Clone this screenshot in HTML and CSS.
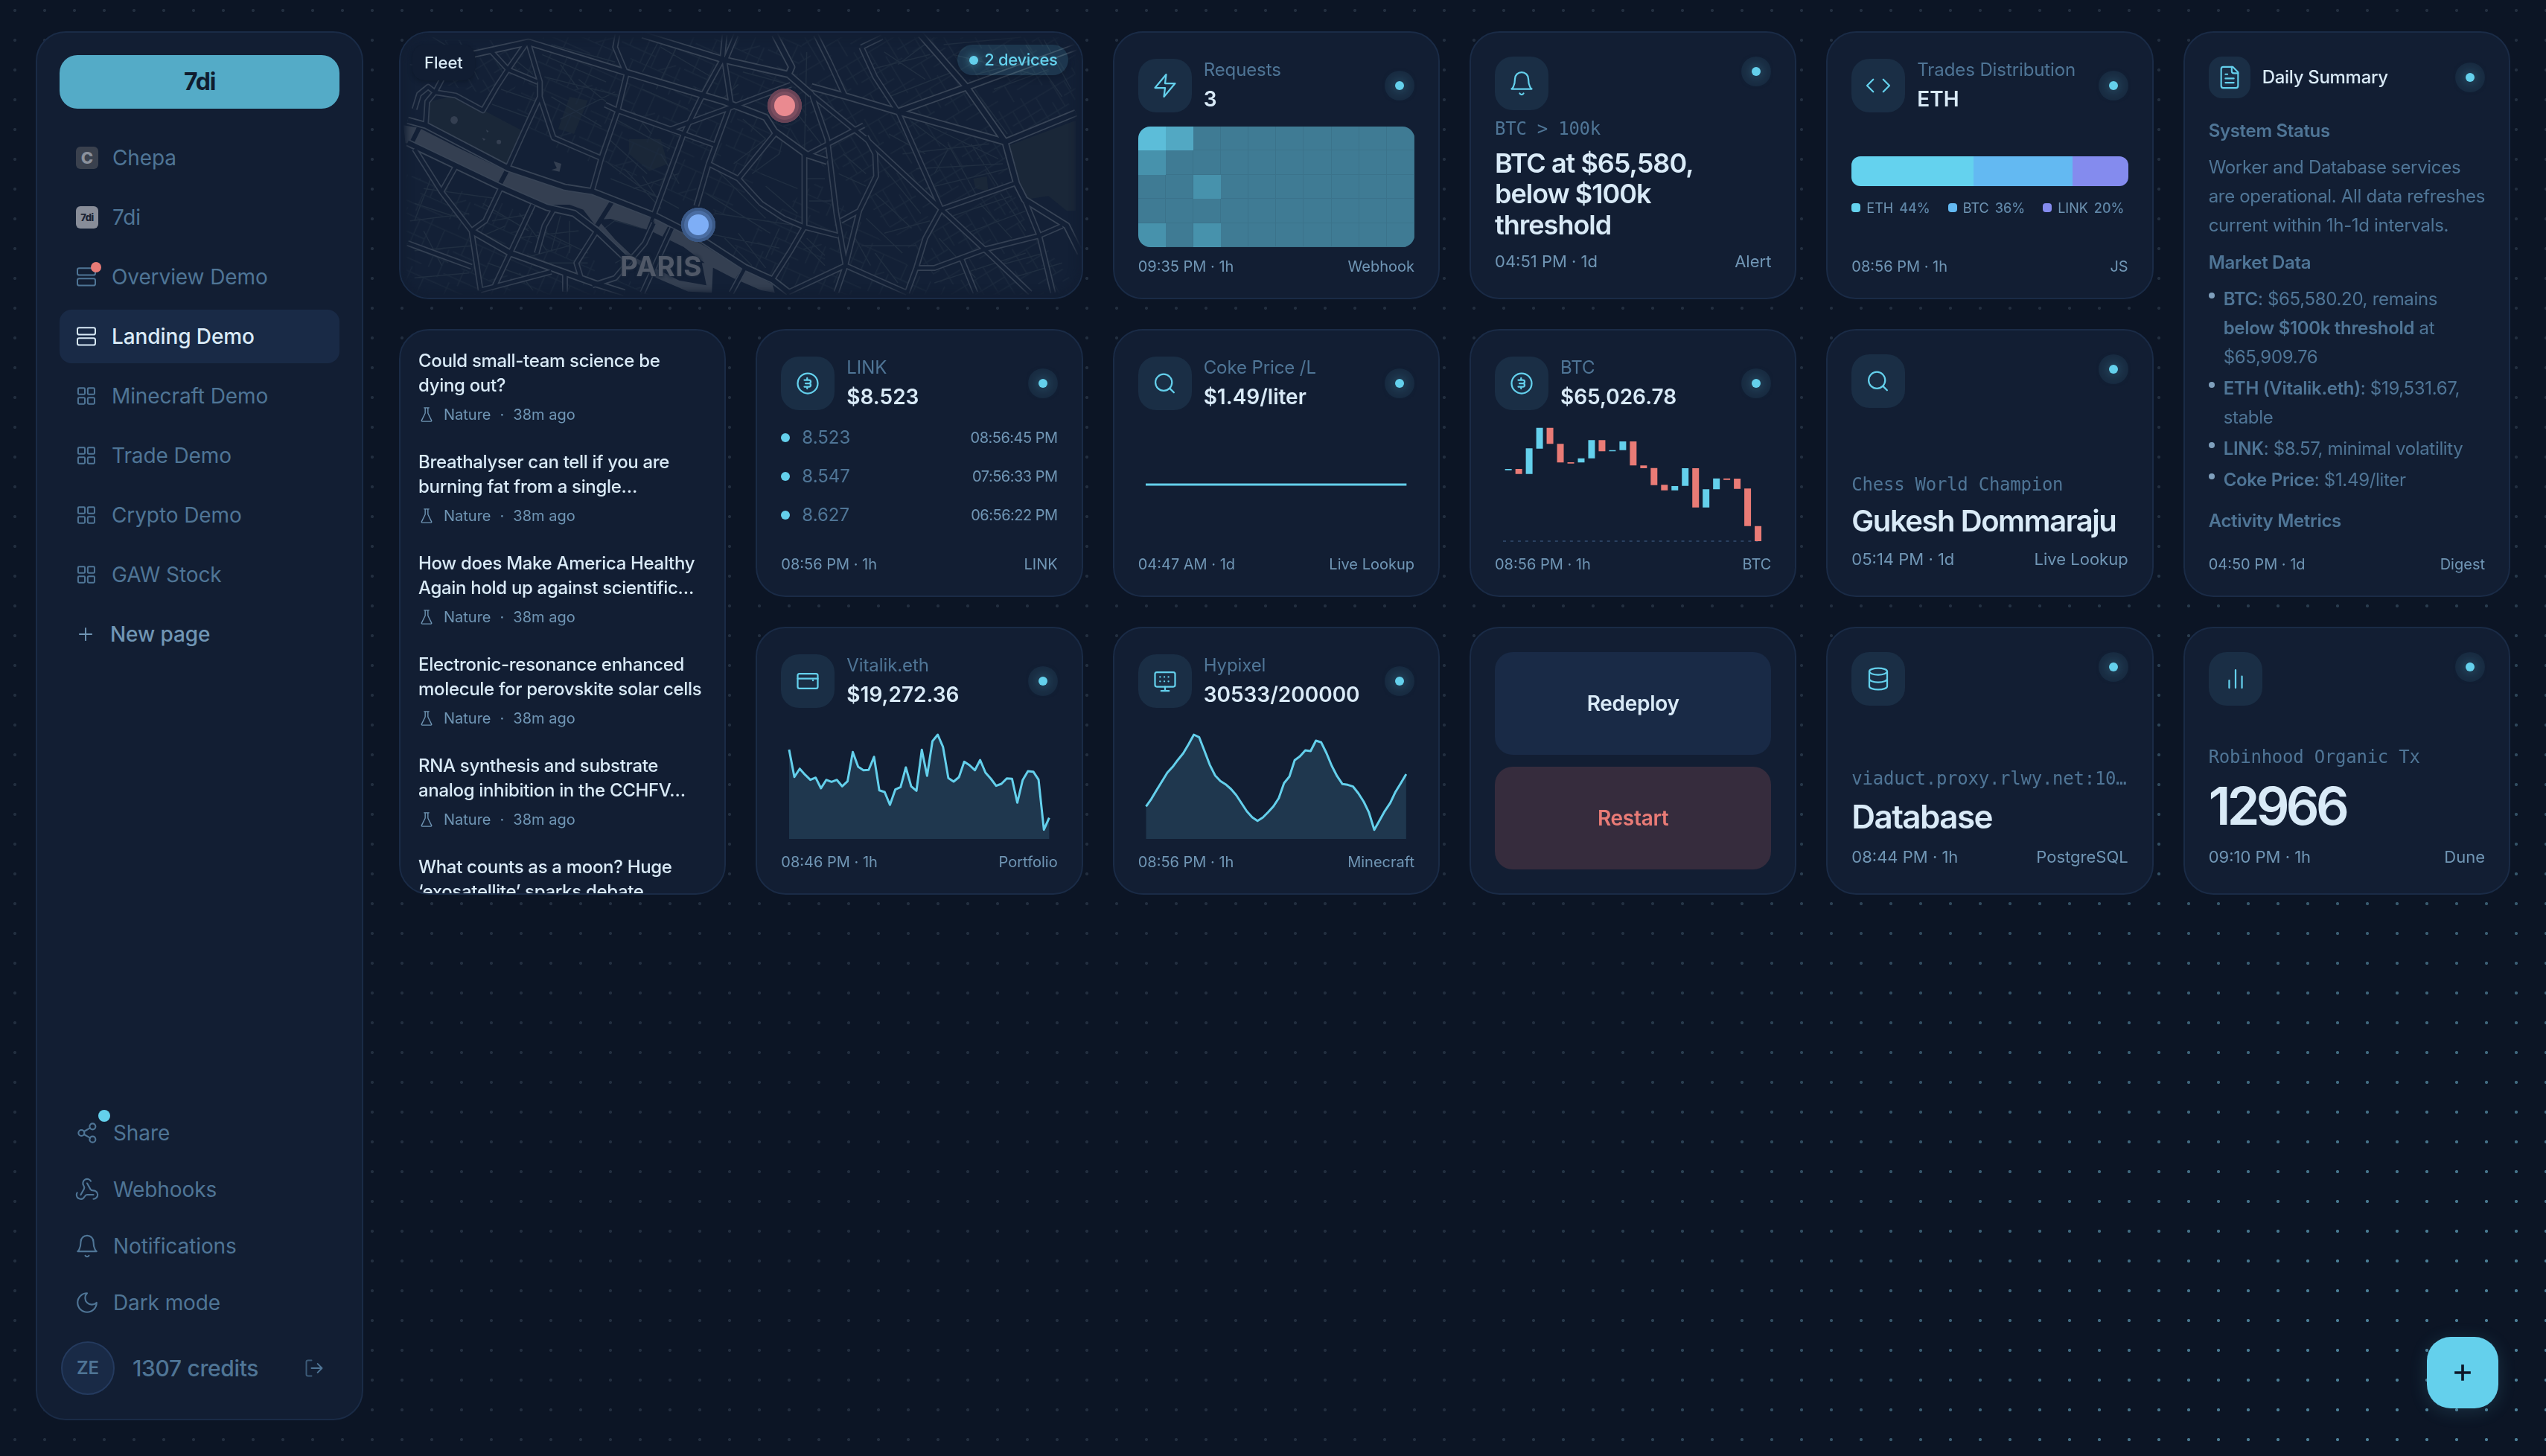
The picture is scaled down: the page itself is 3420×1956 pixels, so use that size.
FILE: index.html
```html
<!DOCTYPE html>
<html lang="en">
  <head>
    <meta charset="UTF-8">
    <meta name="viewport" content="width=device-width, initial-scale=1.0">
    <title>7di - Landing Demo</title>
    <link rel="stylesheet" href="styles.css">
  </head>
  <body>
    <svg class="sprite" xmlns="http://www.w3.org/2000/svg">
      <symbol id="i-rows" viewBox="0 0 24 24"><rect x="3" y="3.2" width="18" height="7" rx="1.8"/><rect x="3" y="13.7" width="18" height="7" rx="1.8"/></symbol>
      <symbol id="i-grid" viewBox="0 0 24 24"><rect x="3.7" y="4" width="6.8" height="6.4" rx="1"/><rect x="13.4" y="4" width="6.8" height="6.4" rx="1"/><rect x="3.7" y="13.6" width="6.8" height="6.4" rx="1"/><rect x="13.4" y="13.6" width="6.8" height="6.4" rx="1"/></symbol>
      <symbol id="i-plus" viewBox="0 0 24 24"><path d="M5.5 12h13M12 5.5v13"/></symbol>
      <symbol id="i-share" viewBox="0 0 24 24"><circle cx="17.2" cy="5.9" r="2.8"/><circle cx="6.6" cy="12" r="2.8"/><circle cx="17.2" cy="18.1" r="2.8"/><path d="M9.1 13.4l5.7 3.3M14.8 7.3L9.1 10.6"/></symbol>
      <symbol id="i-webhook" viewBox="0 0 24 24"><path d="M18 16.98h-5.99c-1.1 0-1.95.94-2.48 1.9A4 4 0 0 1 2 17c.01-.7.2-1.4.57-2"/><path d="m6 17 3.13-5.78c.53-.97.1-2.18-.5-3.1a4 4 0 1 1 6.89-4.06"/><path d="m12 6 3.13 5.73C15.66 12.7 16.9 13 18 13a4 4 0 0 1 0 8"/></symbol>
      <symbol id="i-bell" viewBox="0 0 24 24"><path d="M6 8a6 6 0 0 1 12 0c0 7 3 9 3 9H3s3-2 3-9"/><path d="M10.3 21a1.94 1.94 0 0 0 3.4 0"/></symbol>
      <symbol id="i-moon" viewBox="0 0 24 24"><path d="M12 3a6 6 0 0 0 9 9 9 9 0 1 1-9-9Z"/></symbol>
      <symbol id="i-logout" viewBox="0 0 24 24"><path opacity=".7" d="M9 21H5a2 2 0 0 1-2-2V5a2 2 0 0 1 2-2h4"/><path d="m16 17 5-5-5-5M21 12H9"/></symbol>
      <symbol id="i-zap" viewBox="0 0 24 24"><path d="M13 2 3 14h9l-1 8 10-12h-9l1-8z"/></symbol>
      <symbol id="i-code" viewBox="0 0 24 24"><path d="m16.5 17.5 5.5-5.5-5.5-5.5M7.5 6.5 2 12l5.5 5.5"/></symbol>
      <symbol id="i-file" viewBox="0 0 24 24"><path d="M15 2H6a2 2 0 0 0-2 2v16a2 2 0 0 0 2 2h12a2 2 0 0 0 2-2V7Z"/><path d="M14 2v4a2 2 0 0 0 2 2h4M10 9H8M16 13H8M16 17H8"/></symbol>
      <symbol id="i-coin" viewBox="0 0 24 24"><circle cx="12" cy="12" r="9"/><path d="M9 9h4.2a1.5 1.5 0 0 1 0 3H10M13.2 12a1.5 1.5 0 0 1 0 3H9M11.5 9V7.3M11.5 15v1.7"/></symbol>
      <symbol id="i-search" viewBox="0 0 24 24"><circle cx="10.8" cy="11.2" r="7.4"/><path d="m16.3 16.6 3.6 3.6"/></symbol>
      <symbol id="i-card" viewBox="0 0 24 24"><rect x="3" y="5.4" width="18" height="13.2" rx="1.6"/><path d="M3 9.8h18M16.6 11.4h.2"/></symbol>
      <symbol id="i-monitor" viewBox="0 0 24 24"><rect x="3" y="4" width="18" height="13" rx="1.6"/><path d="M12 17v3.8M8.5 20.8h7M7.5 8.3h.1M11.3 8.3h.1M15 8.3h.1M7.5 12.2h.1M11.3 12.2h.1M15 12.2h.1"/></symbol>
      <symbol id="i-db" viewBox="0 0 24 24"><ellipse cx="12" cy="5.4" rx="8" ry="3"/><path d="M4 5.4v13.2c0 1.7 3.6 3 8 3s8-1.3 8-3V5.4M4 12c0 1.7 3.6 3 8 3s8-1.3 8-3"/></symbol>
      <symbol id="i-bars" viewBox="0 0 24 24"><path d="M17.7 20V9.8M12 20V4M6.3 20v-6.6"/></symbol>
      <symbol id="i-flask" viewBox="0 0 24 24"><path d="M10 2v7.527a2 2 0 0 1-.211.896L4.72 20.55a1 1 0 0 0 .9 1.45h12.76a1 1 0 0 0 .9-1.45l-5.069-10.127A2 2 0 0 1 14 9.527V2M8.5 2h7"/></symbol>
    </svg>

    <div class="dots"></div>
    <div class="dots dots-glow"></div>

    <aside class="sidebar">
      <div class="brand">7di</div>
      <nav class="pages">
        <a class="nav-item"><span class="favicon favicon-c">C</span>Chepa</a>
        <a class="nav-item"><span class="favicon favicon-7">7di</span>7di</a>
        <a class="nav-item"><svg class="icon"><use href="#i-rows"/></svg>Overview Demo<span class="dot-red"></span></a>
        <a class="nav-item active"><svg class="icon"><use href="#i-rows"/></svg>Landing Demo</a>
        <a class="nav-item"><svg class="icon"><use href="#i-grid"/></svg>Minecraft Demo</a>
        <a class="nav-item"><svg class="icon"><use href="#i-grid"/></svg>Trade Demo</a>
        <a class="nav-item"><svg class="icon"><use href="#i-grid"/></svg>Crypto Demo</a>
        <a class="nav-item"><svg class="icon"><use href="#i-grid"/></svg>GAW Stock</a>
        <a class="nav-item new"><svg class="icon"><use href="#i-plus"/></svg>New page</a>
      </nav>
      <nav class="tools">
        <a class="tool-item"><svg class="icon"><use href="#i-share"/></svg>Share<span class="dot-cyan"></span></a>
        <a class="tool-item"><svg class="icon"><use href="#i-webhook"/></svg>Webhooks</a>
        <a class="tool-item"><svg class="icon"><use href="#i-bell"/></svg>Notifications</a>
        <a class="tool-item"><svg class="icon"><use href="#i-moon"/></svg>Dark mode</a>
      </nav>
      <div class="account">
        <span class="avatar">ZE</span>
        <span class="credits">1307 credits</span>
        <svg class="icon"><use href="#i-logout"/></svg>
      </div>
    </aside>

    <main class="board">
      <section class="card map-card">
        <svg class="map" viewBox="0 0 914 356" preserveAspectRatio="none">
          <defs>
            <pattern id="streets-a" width="92" height="70" patternUnits="userSpaceOnUse" patternTransform="rotate(24)">
              <path d="M0 8h92M0 30h50M20 46h72M0 62h60M12 0v30M34 8v38M50 0v46M70 8v54M86 30v40M24 46v24M60 46l20-16"/>
            </pattern>
            <pattern id="streets-b" width="80" height="84" patternUnits="userSpaceOnUse" patternTransform="rotate(-31)">
              <path d="M0 10h80M0 27h46M16 40h64M0 58h56M30 72h50M10 10v30M28 0v58M46 10v48M62 27v57M74 0v40M18 58v26"/>
            </pattern>
            <g id="major">
              <path d="M185 160 310 110 530 235 740 350 830 413 850 470 920 563 965 590"/>
              <path d="M560 80 740 182 880 240 M850 80 887 210 880 240 930 320"/>
              <path d="M930 290 1010 330 1120 390 1355 512 1510 395"/>
              <path d="M1170 80 1270 290 1355 512 1380 680 1398 745 1490 850 1520 960"/>
              <path d="M1120 390 1280 285 1510 130"/>
              <path d="M45 425 85 445 265 618 390 695 450 712 590 812 690 905 785 1018 845 1068 880 1118"/>
              <path d="M45 515 250 695 350 775 410 800 460 870 520 975"/>
              <path d="M185 870 270 960 460 1085 520 1120"/>
            </g>
            <g id="roads">
              <path d="M940 80 970 190 1005 330 M1040 130 1070 250 1120 390 1215 783 M1085 90 1040 130"/>
              <path d="M740 80 735 180 690 330 650 480 580 830 M765 80 740 190 755 370"/>
              <path d="M885 282 750 375 620 462 M750 375 720 525 705 600 678 770"/>
              <path d="M505 80 500 130 525 240 505 390 470 575 450 705 M478 362 505 385 720 525"/>
              <path d="M310 115 335 270 335 330 300 470 265 612 M335 330 365 495 470 578"/>
              <path d="M225 140 265 220 330 270 M305 115 265 220 240 290 210 385 150 325 105 312 M85 440 88 350 105 312 90 290 70 320 60 380 M105 312 120 260"/>
              <path d="M705 600 770 660 850 480 M770 660 820 760 870 820 915 855 990 890"/>
              <path d="M915 560 915 855 885 950 845 1065"/>
              <path d="M930 315 965 500 985 800 1005 1010 M930 320 1050 500 1215 783 M1045 445 920 565"/>
              <path d="M1050 490 1070 560 1072 650 1035 790 995 830 M1035 790 1005 1010"/>
              <path d="M1215 783 1375 680 M1215 783 1180 900 1160 1020 1140 1120 M1215 783 1310 945 1410 1120"/>
              <path d="M1160 1020 1200 1020 1310 945 1430 890 1480 850 M1005 1010 1140 1120 M1005 1010 880 1118 M1005 1010 985 1118"/>
              <path d="M1430 890 1460 1120 M1260 985 1290 1120 M1398 745 1430 890"/>
              <path d="M60 540 120 715 185 870 205 1110 M150 612 120 710 M250 695 215 830 185 870 M45 920 185 1015"/>
              <path d="M320 765 270 960 235 1095 M365 785 345 850 328 960 M460 870 415 1000 425 1060 M205 1110 360 1035 M390 1040 390 1115"/>
              <path d="M585 840 565 920 500 1060 450 1090 M625 860 590 1000 560 1120 M785 1018 755 1120"/>
            </g>
            <path id="lanes" d="M340 160 480 270 M360 120 500 190 M345 250 520 330 M600 90 560 230 M640 110 590 300 M560 300 660 380 M600 130 720 260 M780 230 880 280 M770 280 740 330 M780 420 830 500 760 600 M870 480 860 560 800 640 M900 400 960 540 M920 150 915 560 M820 640 900 700 M830 690 900 800 M920 660 960 660 M925 750 975 750 M1000 560 1050 640 M990 640 1050 690 M1090 150 1180 260 M1060 220 1190 160 M1100 330 1240 230 M1200 90 1120 200 M1220 120 1390 90 M1240 160 1420 240 M1290 240 1460 160 M1330 300 1450 220 M1400 120 1480 330 M1440 100 1500 300 M1300 330 1360 480 M1150 430 1230 540 1200 640 M1180 440 1340 580 M1100 480 1180 560 M1130 560 1320 520 M1160 620 1350 600 M1180 700 1360 620 M1230 520 1290 720 M1280 520 1340 690 M1240 810 1370 730 M1270 880 1400 790 M1300 760 1370 900 M1345 720 1400 870 M1090 620 1170 800 M1070 720 1150 860 M1050 820 1130 960 M1090 880 1190 830 M1040 930 1160 930 M1020 880 1060 1010 M1070 960 1120 1080 M1210 900 1290 1060 M1200 1080 1400 960 M1340 1010 1440 960 M1370 1060 1480 1000 M720 620 830 820 M700 720 840 880 M720 800 900 850 M700 880 860 940 M740 900 800 1010 M770 880 830 1020 M860 860 830 980 M900 900 960 1010 M920 900 960 970 M480 590 560 700 640 780 M520 620 600 780 M490 660 600 740 M540 700 640 640 M560 650 600 760 M600 560 640 680 M480 490 570 640 M420 260 480 350 M380 200 420 300 M360 330 470 450 M380 420 500 310 M500 420 620 540 M540 390 580 480 M60 150 120 130 M50 200 160 230 M100 90 180 180 M160 110 200 260 M280 180 320 240 M250 300 330 350 M230 360 320 420 M80 700 240 740 M60 760 160 820 M50 830 180 800 M100 640 60 830 M60 950 190 930 M80 870 120 1010 M60 1060 180 1040 M210 760 310 870 M230 830 320 800 M210 890 260 850 M290 800 350 950 M280 900 420 870 M340 870 440 960 M380 810 360 950 M400 830 400 960 M300 980 400 930 M340 1000 440 1000 M290 1040 320 1110 M220 1000 310 1060 M520 800 470 870 M500 830 560 860 M560 940 500 1000"/>
          </defs>
          <g class="map-space" transform="translate(-18 -24) scale(.61224 .33333)">
            <path class="park" d="M85 440 90 350 150 325 300 470 265 610Z M1365 525 1510 425 1510 790 1490 790 1450 730 1398 745Z M530 500 600 500 615 600 575 630 530 560Z M400 330 440 345 410 480 375 460Z M1285 660 1315 650 1318 710 1290 700Z"/>
          </g>
          <path fill="url(#streets-a)" d="M180 6 540 6 520 150 430 250 390 230 150 130Z M8 190 140 230 250 300 340 352 8 352Z M560 200 700 330 760 352 540 352 430 300Z"/>
          <path fill="url(#streets-b)" d="M540 6 906 6 906 100 810 150 830 240 906 340 906 352 740 352 600 200 520 150Z M60 10 170 10 150 90 60 70Z"/>
          <g class="map-space" transform="translate(-18 -24) scale(.61224 .33333)">
            <use class="lane" href="#lanes"/>
            <path class="water" d="M36 445 70 455 150 530 265 632 340 668 400 705 450 718 495 752 590 822 640 872 700 935 780 1025 845 1085 850 1120 820 1110 760 1062 700 1005 650 935 580 872 540 848 490 822 462 825 500 905 540 975 640 1070 700 1090 690 1000 715 1000 712 1120 660 1115 590 1060 525 970 470 880 430 785 400 765 345 765 250 690 190 640 120 575 40 515Z"/>
            <ellipse class="water" cx="147" cy="424" rx="8" ry="16"/><ellipse class="water" cx="245" cy="512" rx="5" ry="9"/>
            <path class="water" d="M365 590 382 600 378 632 360 625 372 618Z M208 495l8 6-4 6z M217 463l6 6-4 5z"/>
            <path class="bridge" d="M72 448 50 530 M265 620 245 690 M495 748 460 850 M585 815 572 875 M622 850 600 925 M785 1018 762 1085"/>
            <use class="casing-major" href="#major"/>
            <use class="casing" href="#roads"/>
            <use class="fill-major" href="#major"/>
            <use class="fill" href="#roads"/>
          </g>
        </svg>
        <div class="map-fade"></div>
        <span class="map-city">PARIS</span>
        <span class="pin pin-red"></span>
        <span class="pin pin-blue"></span>
        <div class="map-bar">
          <span class="map-title">Fleet</span>
          <span class="map-count"><i></i>2 devices</span>
        </div>
      </section>

      <section class="card compact">
        <header class="head">
          <span class="tile"><svg class="icon"><use href="#i-zap"/></svg></span>
          <div class="head-text"><span>Requests</span><b>3</b></div>
          <span class="status"></span>
        </header>
        <div class="heatmap">
          <i class="l4"></i><i class="l3"></i><i></i><i></i><i></i><i></i><i></i><i></i><i></i><i></i>
          <i class="l2"></i><i></i><i></i><i></i><i></i><i></i><i></i><i></i><i></i><i></i>
          <i></i><i></i><i class="l2"></i><i></i><i></i><i></i><i></i><i></i><i></i><i></i>
          <i></i><i></i><i></i><i></i><i></i><i></i><i></i><i></i><i></i><i></i>
          <i class="l2"></i><i></i><i class="l2"></i><i></i><i></i><i></i><i></i><i></i><i></i><i></i>
        </div>
        <footer class="foot"><span>09:35 PM · 1h</span><span>Webhook</span></footer>
      </section>

      <section class="card stat">
        <header class="head-top">
          <span class="tile"><svg class="icon"><use href="#i-bell"/></svg></span>
          <span class="status"></span>
        </header>
        <div class="label">BTC &gt; 100k</div>
        <div class="value v36">BTC at $65,580,<br>below $100k<br>threshold</div>
        <footer class="foot"><span>04:51 PM · 1d</span><span>Alert</span></footer>
      </section>

      <section class="card compact">
        <header class="head">
          <span class="tile"><svg class="icon"><use href="#i-code"/></svg></span>
          <div class="head-text"><span>Trades Distribution</span><b>ETH</b></div>
          <span class="status"></span>
        </header>
        <div class="share">
          <div class="share-bar">
            <i class="c1" style="width:44%"></i><i class="c2" style="width:36%"></i><i class="c3" style="width:20%"></i>
          </div>
          <ul class="legend">
            <li><i class="c1"></i>ETH <b>44%</b></li>
            <li><i class="c2"></i>BTC <b>36%</b></li>
            <li><i class="c3"></i>LINK <b>20%</b></li>
          </ul>
        </div>
        <footer class="foot"><span>08:56 PM · 1h</span><span>JS</span></footer>
      </section>

      <section class="card compact digest">
        <header class="digest-head">
          <span class="tile tile-sm"><svg class="icon"><use href="#i-file"/></svg></span>
          <b>Daily Summary</b>
          <span class="status"></span>
        </header>
        <div class="digest-body">
          <h4>System Status</h4>
          <p>Worker and Database services<br>are operational. All data refreshes<br>current within 1h-1d intervals.</p>
          <h4>Market Data</h4>
          <ul>
            <li><b>BTC</b>: $65,580.20, remains<br><b>below $100k threshold</b> at<br>$65,909.76</li>
            <li><b>ETH (Vitalik.eth)</b>: $19,531.67,<br>stable</li>
            <li><b>LINK</b>: $8.57, minimal volatility</li>
            <li><b>Coke Price</b>: $1.49/liter</li>
          </ul>
          <h4>Activity Metrics</h4>
        </div>
        <footer class="foot"><span>04:50 PM · 1d</span><span>Digest</span></footer>
      </section>

      <section class="card news">
        <article><h3>Could small-team science be<br>dying out?</h3><p><svg class="icon"><use href="#i-flask"/></svg><span>Nature</span><span>·</span><span>38m ago</span></p></article>
        <article><h3>Breathalyser can tell if you are<br>burning fat from a single…</h3><p><svg class="icon"><use href="#i-flask"/></svg><span>Nature</span><span>·</span><span>38m ago</span></p></article>
        <article><h3>How does Make America Healthy<br>Again hold up against scientific…</h3><p><svg class="icon"><use href="#i-flask"/></svg><span>Nature</span><span>·</span><span>38m ago</span></p></article>
        <article><h3>Electronic-resonance enhanced<br>molecule for perovskite solar cells</h3><p><svg class="icon"><use href="#i-flask"/></svg><span>Nature</span><span>·</span><span>38m ago</span></p></article>
        <article><h3>RNA synthesis and substrate<br>analog inhibition in the CCHFV…</h3><p><svg class="icon"><use href="#i-flask"/></svg><span>Nature</span><span>·</span><span>38m ago</span></p></article>
        <article><h3>What counts as a moon? Huge<br>‘exosatellite’ sparks debate</h3></article>
      </section>

      <section class="card compact">
        <header class="head">
          <span class="tile"><svg class="icon"><use href="#i-coin"/></svg></span>
          <div class="head-text"><span>LINK</span><b>$8.523</b></div>
          <span class="status"></span>
        </header>
        <ul class="log">
          <li><i></i><span>8.523</span><time>08:56:45 PM</time></li>
          <li><i></i><span>8.547</span><time>07:56:33 PM</time></li>
          <li><i></i><span>8.627</span><time>06:56:22 PM</time></li>
        </ul>
        <footer class="foot"><span>08:56 PM · 1h</span><span>LINK</span></footer>
      </section>

      <section class="card compact">
        <header class="head">
          <span class="tile"><svg class="icon"><use href="#i-search"/></svg></span>
          <div class="head-text"><span>Coke Price /L</span><b>$1.49/liter</b></div>
          <span class="status"></span>
        </header>
        <svg class="chart" viewBox="0 0 372 162" preserveAspectRatio="none"><path class="line flat" d="M10 81H361"/></svg>
        <footer class="foot"><span>04:47 AM · 1d</span><span>Live Lookup</span></footer>
      </section>

      <section class="card compact">
        <header class="head">
          <span class="tile"><svg class="icon"><use href="#i-coin"/></svg></span>
          <div class="head-text"><span>BTC</span><b>$65,026.78</b></div>
          <span class="status"></span>
        </header>
        <svg class="chart" viewBox="0 0 372 162" preserveAspectRatio="none">
          <path class="baseline" d="M11 157H354"/>
          <path class="up" d="M18.2 60v1.7M46.2 32.3v34.4M60.2 4.7v28M116.2 45.7v5.6M130.2 21.3v24.4M158.2 34.7v1.6M172.2 23v11.7M242.2 83v5.7M256.2 59v23.7M284.2 87.3v24.4M298.2 72.7v14.6"/>
          <path class="down" d="M32.2 60v6.7M74.2 4.7v21.6M88.2 26.3v25M102.2 51v1.7M144.2 21.3v15M186.2 23v32.3M200.2 55.3v3.7M214.2 58.7v23M228.2 81.3v7.4M270.2 59v52.7M312.2 72.7v2M326.2 73v13.7M340.2 86.3v50.4M354.2 136.7v20.3"/>
        </svg>
        <footer class="foot"><span>08:56 PM · 1h</span><span>BTC</span></footer>
      </section>

      <section class="card stat">
        <header class="head-top">
          <span class="tile"><svg class="icon"><use href="#i-search"/></svg></span>
          <span class="status"></span>
        </header>
        <div class="label">Chess World Champion</div>
        <div class="value v40">Gukesh Dommaraju</div>
        <footer class="foot"><span>05:14 PM · 1d</span><span>Live Lookup</span></footer>
      </section>

      <section class="card compact">
        <header class="head">
          <span class="tile"><svg class="icon"><use href="#i-card"/></svg></span>
          <div class="head-text"><span>Vitalik.eth</span><b>$19,272.36</b></div>
          <span class="status"></span>
        </header>
        <svg class="chart" viewBox="0 0 372 162" preserveAspectRatio="none">
          <path class="area" d="M11 157V37L18.1 73.7 25.3 62.7 32.4 70.7 39.6 77.7 46.7 74.7 53.9 89 61 77.7 68.1 80.3 75.3 77.7 82.4 86.3 89.6 79.7 96.7 40.3 103.9 60 111 64.7 118.1 64.3 125.3 46.7 132.4 91.7 139.6 94 146.7 111.3 153.9 90.7 161 87.3 168.1 61 175.3 86.3 182.4 92.3 189.6 37.3 196.7 72.3 203.9 25.7 211 17 218.1 33.3 225.3 75.3 232.4 80 239.6 74 246.7 53.3 253.9 58 261 64.7 268.1 51 275.3 68 282.4 76 289.6 85.7 296.7 83 303.9 75.7 311 76.3 318.1 108.3 325.3 78 332.4 66 339.6 66.7 346.7 77.3 353.9 144.7 361 128.7V157Z"/>
          <polyline class="line" points="11,37 18.1,73.7 25.3,62.7 32.4,70.7 39.6,77.7 46.7,74.7 53.9,89 61,77.7 68.1,80.3 75.3,77.7 82.4,86.3 89.6,79.7 96.7,40.3 103.9,60 111,64.7 118.1,64.3 125.3,46.7 132.4,91.7 139.6,94 146.7,111.3 153.9,90.7 161,87.3 168.1,61 175.3,86.3 182.4,92.3 189.6,37.3 196.7,72.3 203.9,25.7 211,17 218.1,33.3 225.3,75.3 232.4,80 239.6,74 246.7,53.3 253.9,58 261,64.7 268.1,51 275.3,68 282.4,76 289.6,85.7 296.7,83 303.9,75.7 311,76.3 318.1,108.3 325.3,78 332.4,66 339.6,66.7 346.7,77.3 353.9,144.7 361,128.7"/>
        </svg>
        <footer class="foot"><span>08:46 PM · 1h</span><span>Portfolio</span></footer>
      </section>

      <section class="card compact">
        <header class="head">
          <span class="tile"><svg class="icon"><use href="#i-monitor"/></svg></span>
          <div class="head-text"><span>Hypixel</span><b>30533/200000</b></div>
          <span class="status"></span>
        </header>
        <svg class="chart" viewBox="0 0 372 162" preserveAspectRatio="none">
          <path class="area" d="M10.5 157V113.3L17.6 103.3 24.8 91.3 31.9 79.7 39.1 68 46.2 60.3 53.4 50.7 60.5 42 67.6 30 74.8 17 81.9 20.3 89.1 38.7 96.2 57.3 103.4 71.7 110.5 79.3 117.6 83.7 124.8 90 131.9 98.3 139.1 109.3 146.2 120 153.4 128 160.5 132.7 167.6 128.3 174.8 121 181.9 113.3 189.1 102.3 196.2 82 203.4 73.3 210.5 51.3 217.6 46 224.8 38 231.9 39 239.1 25 246.2 27.3 253.4 42 260.5 59 267.6 72.7 274.8 83.3 281.9 84.3 289.1 86.7 296.2 95.7 303.4 107 310.5 121.7 317.6 144.7 324.8 132 331.9 119.3 339.1 108.7 346.2 93.7 353.4 82 360.5 70V157Z"/>
          <polyline class="line" points="10.5,113.3 17.6,103.3 24.8,91.3 31.9,79.7 39.1,68 46.2,60.3 53.4,50.7 60.5,42 67.6,30 74.8,17 81.9,20.3 89.1,38.7 96.2,57.3 103.4,71.7 110.5,79.3 117.6,83.7 124.8,90 131.9,98.3 139.1,109.3 146.2,120 153.4,128 160.5,132.7 167.6,128.3 174.8,121 181.9,113.3 189.1,102.3 196.2,82 203.4,73.3 210.5,51.3 217.6,46 224.8,38 231.9,39 239.1,25 246.2,27.3 253.4,42 260.5,59 267.6,72.7 274.8,83.3 281.9,84.3 289.1,86.7 296.2,95.7 303.4,107 310.5,121.7 317.6,144.7 324.8,132 331.9,119.3 339.1,108.7 346.2,93.7 353.4,82 360.5,70"/>
        </svg>
        <footer class="foot"><span>08:56 PM · 1h</span><span>Minecraft</span></footer>
      </section>

      <section class="card actions">
        <button class="btn">Redeploy</button>
        <button class="btn btn-danger">Restart</button>
      </section>

      <section class="card stat">
        <header class="head-top">
          <span class="tile"><svg class="icon"><use href="#i-db"/></svg></span>
          <span class="status"></span>
        </header>
        <div class="label">viaduct.proxy.rlwy.net:10…</div>
        <div class="value v44">Database</div>
        <footer class="foot"><span>08:44 PM · 1h</span><span>PostgreSQL</span></footer>
      </section>

      <section class="card stat">
        <header class="head-top">
          <span class="tile"><svg class="icon"><use href="#i-bars"/></svg></span>
          <span class="status"></span>
        </header>
        <div class="label">Robinhood Organic Tx</div>
        <div class="value v70">12966</div>
        <footer class="foot"><span>09:10 PM · 1h</span><span>Dune</span></footer>
      </section>
    </main>

    <button class="fab"><svg class="icon"><use href="#i-plus"/></svg></button>
  </body>
</html>
```
FILE: styles.css
```css
:root {
  --bg: #0c1525;
  --card: #121e33;
  --line: #1a2b46;
  --raised: #192a46;
  --text: #d9eaf7;
  --muted: #4f7596;
  --soft: #7096b5;
  --cyan: #64d0ec;
  --red: #e97b76;
  --tile: #1a2e45;
}

* {
  margin: 0;
  padding: 0;
  box-sizing: border-box;
}

body {
  display: flex;
  gap: 48px;
  height: 1956px;
  padding: 42px 48px 48px;
  overflow: hidden;
  background: var(--bg);
  color: var(--text);
  font-family: Inter, "Liberation Sans", sans-serif;
  font-size: 24px;
  line-height: 1.5;
}

ul {
  list-style: none;
}

.sprite {
  position: absolute;
  width: 0;
  height: 0;
}

.icon {
  flex: none;
  fill: none;
  stroke: currentColor;
  stroke-width: 1.5;
  stroke-linecap: round;
  stroke-linejoin: round;
}

/* dotted background */
.dots {
  position: fixed;
  inset: 0;
  z-index: -1;
  background-image: radial-gradient(circle, #222e3f 2px, transparent 2.2px);
  background-size: 40px 40px;
  background-position: 0 -6px;
}

.dots-glow {
  background-image: radial-gradient(circle, #4a7d95 2px, transparent 2.2px);
  -webkit-mask-image: radial-gradient(circle at 3220px 1880px, #000 200px, transparent 1250px);
  mask-image: radial-gradient(circle at 3220px 1880px, #000 200px, transparent 1250px);
}

/* sidebar */
.sidebar {
  display: flex;
  flex-direction: column;
  flex: none;
  width: 440px;
  padding: 30px;
  background: var(--card);
  border: 2px solid var(--line);
  border-radius: 40px;
  color: var(--muted);
  font-size: 28px;
}

.brand {
  height: 72px;
  margin-bottom: 30px;
  border-radius: 24px;
  background: #54abc7;
  color: #101c2e;
  font-size: 32px;
  font-weight: 700;
  line-height: 72px;
  letter-spacing: -1.2px;
  text-align: center;
}

.pages,
.tools {
  display: flex;
  flex-direction: column;
  gap: 8px;
}

.tools {
  margin-top: auto;
}

.nav-item,
.tool-item {
  position: relative;
  display: flex;
  align-items: center;
  gap: 18px;
  height: 72px;
  padding: 0 20px;
  border-radius: 16px;
  letter-spacing: -.1px;
}

.tool-item {
  height: 68px;
}

.nav-item .icon {
  width: 32px;
  height: 32px;
}

.tool-item .icon {
  width: 34px;
  height: 34px;
}

.nav-item.active {
  background: var(--raised);
  color: var(--text);
  font-weight: 500;
}

.nav-item.new {
  color: var(--soft);
  font-weight: 500;
}

.nav-item.new .icon {
  width: 30px;
  height: 30px;
}

.favicon {
  width: 30px;
  height: 30px;
  margin: 0 1px 0 2px;
  border-radius: 6px;
  color: #8b919c;
  font-weight: 800;
  line-height: 30px;
  text-align: center;
}

.favicon-c {
  background: #3a414e;
  font-size: 22px;
}

.favicon-7 {
  background: #888d99;
  color: #1b2333;
  font-size: 13px;
  letter-spacing: -.5px;
}

.dot-red,
.dot-cyan {
  position: absolute;
  border-radius: 50%;
}

.dot-red {
  left: 42px;
  top: 16px;
  width: 14px;
  height: 14px;
  background: var(--red);
}

.dot-cyan {
  left: 52px;
  top: 3px;
  width: 16px;
  height: 16px;
  background: var(--cyan);
}

.account {
  display: flex;
  align-items: center;
  margin: 18px 0 2px;
  padding: 0 20px 0 2px;
}

.avatar {
  width: 72px;
  height: 72px;
  border: 2px solid #243a5e;
  border-radius: 50%;
  background: var(--raised);
  font-size: 24px;
  font-weight: 600;
  line-height: 68px;
  text-align: center;
}

.credits {
  margin-left: 24px;
  font-size: 30px;
  font-weight: 500;
  letter-spacing: -.35px;
}

.account .icon {
  width: 28px;
  height: 28px;
  margin-left: auto;
  stroke-width: 1.7;
}

/* board */
.board {
  display: grid;
  flex: 1;
  grid-template-columns: repeat(6, 1fr);
  grid-template-rows: repeat(3, 360px);
  gap: 40px;
}

.card {
  position: relative;
  display: flex;
  flex-direction: column;
  min-width: 0;
  padding: 32px;
  overflow: hidden;
  background: var(--card);
  border: 2px solid var(--line);
  border-radius: 40px;
}

.tile {
  display: flex;
  align-items: center;
  justify-content: center;
  flex: none;
  width: 72px;
  height: 72px;
  border-radius: 24px;
  background: var(--tile);
  color: var(--cyan);
}

.tile .icon {
  width: 36px;
  height: 36px;
}

.tile-sm {
  width: 56px;
  height: 56px;
  border-radius: 18px;
}

.tile-sm .icon {
  width: 34px;
  height: 34px;
}

.status {
  display: flex;
  align-items: center;
  justify-content: center;
  flex: none;
  width: 40px;
  height: 40px;
  margin-left: auto;
  border-radius: 50%;
  background: #182a40;
}

.status::after {
  content: "";
  width: 12px;
  height: 12px;
  border-radius: 50%;
  background: var(--cyan);
  box-shadow: 0 0 16px rgba(100, 208, 236, .5);
}

.head {
  display: flex;
  align-items: center;
  gap: 16px;
  height: 78px;
}

.head-text {
  display: flex;
  flex-direction: column;
  white-space: nowrap;
}

.head-text span {
  color: var(--muted);
  letter-spacing: -.1px;
}

.head-text b {
  font-size: 28px;
  font-weight: 600;
}

.foot {
  display: flex;
  justify-content: space-between;
  margin-top: auto;
  color: var(--soft);
  font-size: 22px;
}

.compact .foot {
  font-size: 20px;
  line-height: 20px;
}

.compact .head + * {
  height: 162px;
  margin-top: 16px;
}

/* heatmap */
.heatmap {
  display: grid;
  grid-template-columns: repeat(10, 1fr);
  grid-template-rows: repeat(5, 1fr);
  overflow: hidden;
  border-radius: 16px;
}

.heatmap i {
  background: #3f7b94;
  box-shadow: inset -1px -1px #3b738b;
}

.heatmap .l2 { background: #4792ac; box-shadow: none; }
.heatmap .l3 { background: #52a8c3; box-shadow: none; }
.heatmap .l4 { background: #5cbdd9; box-shadow: none; }

/* big value cards */
.head-top {
  display: flex;
  align-items: flex-start;
  height: 72px;
  margin-bottom: auto;
}

.label {
  margin-bottom: 8px;
  color: var(--muted);
  font-family: "DejaVu Sans Mono", "Liberation Mono", monospace;
  letter-spacing: -.25px;
  white-space: nowrap;
}

.value {
  margin-bottom: 12px;
  font-weight: 600;
  line-height: 1.15;
  white-space: nowrap;
}

.stat .foot {
  margin-top: 0;
}

.v36 {
  font-size: 36px;
  letter-spacing: -1px;
}

.v40 {
  font-size: 40px;
  letter-spacing: -1.45px;
}

.v44 {
  font-size: 44px;
  letter-spacing: -1.6px;
}

.v70 {
  font-size: 70px;
  letter-spacing: -4.6px;
}

/* distribution */
.share {
  display: flex;
  flex-direction: column;
  justify-content: center;
  gap: 16px;
}

.share-bar {
  display: flex;
  height: 40px;
  overflow: hidden;
  border-radius: 12px;
}

.c1 { background: #64d2ee; }
.c2 { background: #63b9f2; }
.c3 { background: #848bee; }

.legend {
  display: flex;
  gap: 24px;
  color: var(--soft);
  font-size: 18px;
}

.legend li {
  display: flex;
  align-items: center;
  gap: 8px;
}

.legend i {
  width: 12px;
  height: 12px;
  border-radius: 4px;
}

.legend b {
  color: #5f86a7;
  font-weight: 500;
}

/* digest */
.digest {
  grid-row: span 2;
}

.digest-head {
  display: flex;
  align-items: center;
  gap: 16px;
  height: 56px;
}

.digest-head b {
  font-weight: 500;
  letter-spacing: -.3px;
}

.digest-body {
  margin-top: 23.5px;
  color: var(--muted);
  line-height: 39px;
  letter-spacing: -.32px;
  white-space: nowrap;
}

.digest-body h4 {
  font-size: 24px;
  font-weight: 600;
}

.digest-body p,
.digest-body ul {
  margin: 10.5px 0;
}

.digest-body ul {
  margin-bottom: 15.5px;
}

.digest-body li {
  position: relative;
  margin-bottom: 3px;
  padding-left: 20px;
}

.digest-body li::before {
  content: "";
  position: absolute;
  left: 0;
  top: 11px;
  width: 8px;
  height: 8px;
  border-radius: 50%;
  background: #7fa0bd;
}

.digest-body li b {
  font-weight: 600;
}

/* news */
.news {
  grid-row: span 2;
  gap: 32px;
  padding: 24px;
}

.news h3 {
  font-size: 24px;
  font-weight: 500;
  line-height: 33px;
  letter-spacing: -.32px;
  white-space: nowrap;
}

.news p {
  display: flex;
  align-items: center;
  gap: 12px;
  margin-top: 8px;
  color: var(--soft);
  font-size: 20px;
}

.news .icon {
  width: 22px;
  height: 22px;
}

/* value log */
.log {
  display: flex;
  flex-direction: column;
  gap: 16px;
}

.log li {
  display: flex;
  align-items: center;
  gap: 16px;
  color: var(--muted);
}

.log i {
  width: 12px;
  height: 12px;
  border-radius: 50%;
  background: var(--cyan);
}

.log time {
  margin-left: auto;
  color: var(--soft);
  font-size: 20px;
  letter-spacing: -.5px;
}

/* charts */
.chart {
  display: block;
  width: 100%;
  overflow: visible;
}

.line {
  fill: none;
  stroke: var(--cyan);
  stroke-width: 3;
  stroke-linejoin: round;
}

.area {
  fill: #1f374e;
}

.up,
.down {
  fill: none;
  stroke-width: 9;
}

.up { stroke: var(--cyan); }
.down { stroke: var(--red); }

.baseline {
  stroke: #2a4060;
  stroke-width: 2;
  stroke-dasharray: 4 6;
}

/* buttons */
.actions {
  gap: 16px;
}

.btn {
  flex: 1;
  border: 0;
  border-radius: 24px;
  background: var(--raised);
  color: var(--text);
  font: 600 28px Inter, sans-serif;
  letter-spacing: -.3px;
}

.btn-danger {
  background: #362c3d;
  color: var(--red);
}

.fab {
  position: fixed;
  right: 64px;
  bottom: 64px;
  display: flex;
  align-items: center;
  justify-content: center;
  width: 96px;
  height: 96px;
  border: 0;
  border-radius: 32px;
  background: var(--cyan);
  box-shadow: 0 4px 24px rgba(100, 208, 236, .15);
  color: #0d1728;
}

.fab .icon {
  width: 40px;
  height: 40px;
  stroke-width: 2.2;
  stroke-linecap: butt;
}

/* map */
.map-card {
  grid-column: span 2;
  padding: 16px 18px;
}

.map,
.map-fade {
  position: absolute;
  inset: 0;
  width: 100%;
  height: 100%;
}

.map {
  background: #132036;
}

.map-fade {
  border-radius: 38px;
  box-shadow: inset 0 0 10px 8px var(--card);
}

.map-space path,
#major path,
#roads path,
#lanes {
  vector-effect: non-scaling-stroke;
  stroke-linejoin: round;
}

.map-space use,
.bridge {
  fill: none;
}

.park { fill: #1a2738; }
.water { fill: #343f51; }
.bridge { stroke: #132036; stroke-width: 6; }
.lane { stroke: #202e41; stroke-width: 1.5; }
.casing { stroke: #344053; stroke-width: 8; }
.casing-major { stroke: #384456; stroke-width: 10; }
.fill { stroke: #132036; stroke-width: 4.6; }
.fill-major { stroke: #132036; stroke-width: 6.4; }

#streets-a path,
#streets-b path {
  fill: none;
  stroke: #1b293d;
  stroke-width: 1.4;
}

.map-city {
  position: absolute;
  left: 295px;
  top: 286px;
  color: #505867;
  font-size: 37px;
  font-weight: 700;
  letter-spacing: .5px;
  text-shadow: 0 0 4px #1c293c, 0 0 4px #1c293c;
}

.pin {
  position: absolute;
  width: 46px;
  height: 46px;
  border-radius: 50%;
}

.pin::after {
  content: "";
  position: absolute;
  inset: 9px;
  border-radius: 50%;
}

.pin-red {
  left: 493px;
  top: 75px;
  background: #7d4e60;
  box-shadow: inset 0 0 0 4px #684356;
}

.pin-red::after { background: #ea8a90; }

.pin-blue {
  left: 377px;
  top: 235px;
  background: #4a6da3;
  box-shadow: inset 0 0 0 4px #3b5987;
}

.pin-blue::after { background: #7eaef6; }

.map-bar {
  position: relative;
  display: flex;
  align-items: flex-start;
  justify-content: space-between;
}

.map-title {
  padding: 8px 16px 7px;
  margin-left: -2px;
  border-radius: 16px;
  background: #111d32;
  box-shadow: 0 2px 6px rgba(8, 14, 26, .4);
  font-size: 22px;
  font-weight: 500;
}

.map-count {
  display: flex;
  align-items: center;
  gap: 8px;
  height: 41px;
  padding: 0 14px 0 16px;
  border-radius: 21px;
  background: rgba(100, 208, 236, .13);
  box-shadow: 0 4px 8px rgba(8, 14, 26, .3);
  color: var(--cyan);
  font-size: 22px;
  font-weight: 500;
  letter-spacing: -.3px;
}

.map-count i {
  width: 12px;
  height: 12px;
  border-radius: 50%;
  background: var(--cyan);
  box-shadow: 0 0 12px rgba(100, 208, 236, .6);
}
```
